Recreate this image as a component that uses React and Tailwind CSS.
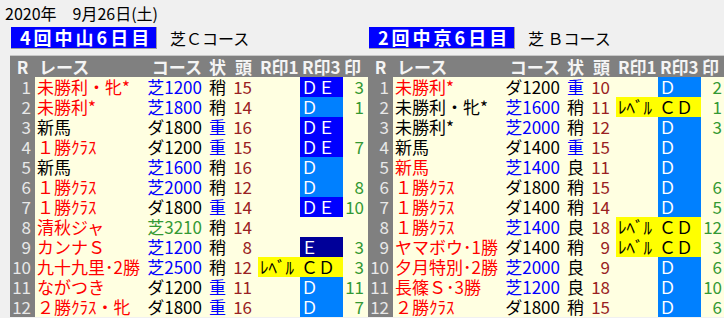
import React from 'react';

const FONT = { fontFamily: '"Noto Sans CJK JP", "Noto Sans", sans-serif' };

const GRID = 'grid grid-cols-[25px_112px_58px_25px_28px_42px_43px_25px]';

const nameColor = { r: 'text-[#ff0000]', k: 'text-black' };
const courseColor = { b: 'text-[#0000ff]', k: 'text-black', g: 'text-[#339933]' };
const markBg = {
  DE: 'bg-[#0000ff] text-white',
  D: 'bg-[#0080ff] text-white',
  E: 'bg-[#000099] text-white',
  CD: 'bg-[#ffff00] text-black',
};

// [name, nameColor, course, courseColor, cond, heads, r3, mark]
const nakayama = [
  ['未勝利・牝*', 'r', '芝1200', 'b', '稍', '15', 'DE', '3'],
  ['未勝利*', 'r', '芝1800', 'b', '稍', '14', 'D', '1'],
  ['新馬', 'k', 'ダ1800', 'k', '重', '16', 'DE', ''],
  ['１勝ｸﾗｽ', 'r', 'ダ1200', 'k', '重', '15', 'DE', '7'],
  ['新馬', 'k', '芝1600', 'b', '稍', '16', 'D', ''],
  ['１勝ｸﾗｽ', 'r', '芝2000', 'b', '稍', '12', 'D', '8'],
  ['１勝ｸﾗｽ', 'r', 'ダ1800', 'k', '重', '14', 'DE', '10'],
  ['清秋ジャ', 'r', '芝3210', 'g', '稍', '14', '', ''],
  ['カンナＳ', 'r', '芝1200', 'b', '稍', '8', 'E', '3'],
  ['九十九里･2勝', 'r', '芝2500', 'b', '稍', '12', 'CD', '3'],
  ['ながつき', 'r', 'ダ1200', 'k', '重', '11', 'D', '11'],
  ['２勝ｸﾗｽ・牝', 'r', 'ダ1800', 'k', '重', '16', 'D', '7'],
];

const chukyo = [
  ['未勝利*', 'r', 'ダ1200', 'k', '重', '10', 'D', '2'],
  ['未勝利・牝*', 'k', '芝1600', 'b', '稍', '11', 'CD', '1'],
  ['未勝利*', 'k', '芝2000', 'b', '稍', '12', 'D', '3'],
  ['新馬', 'k', 'ダ1400', 'k', '重', '15', 'D', ''],
  ['新馬', 'r', '芝1400', 'b', '良', '11', 'D', ''],
  ['１勝ｸﾗｽ', 'r', 'ダ1800', 'k', '稍', '15', 'D', '6'],
  ['１勝ｸﾗｽ', 'r', 'ダ1400', 'k', '稍', '14', 'D', '5'],
  ['１勝ｸﾗｽ', 'r', '芝1400', 'b', '良', '18', 'CD', '12'],
  ['ヤマボウ･1勝', 'r', 'ダ1400', 'k', '稍', '9', 'CD', '3'],
  ['夕月特別･2勝', 'r', '芝2000', 'b', '良', '9', 'D', '6'],
  ['長篠Ｓ･3勝', 'r', '芝1200', 'b', '良', '18', 'D', '10'],
  ['２勝ｸﾗｽ', 'r', 'ダ1800', 'k', '稍', '15', 'D', '6'],
];

const r3Label = { DE: 'ＤＥ', D: 'Ｄ', E: 'Ｅ', CD: 'ＣＤ' };

function RaceRow({ no, row }) {
  const [name, nc, course, cc, cond, heads, r3, mark] = row;
  const isLevel = r3 === 'CD';
  return (
    <div className={`${GRID} h-[20px] leading-[20px] text-[17px] whitespace-nowrap`}>
      <div className="bg-[#808080] text-[#e8e8e8] text-right pr-[4px]">{no}</div>
      <div className={`bg-[#ffffe1] pl-[2px] ${nameColor[nc]}`}>{name}</div>
      <div className={`bg-[#ffffe1] text-right pr-[3px] ${courseColor[cc]}`}>{course}</div>
      <div className={`bg-[#ffffe1] text-center ${cond === '重' ? 'text-[#0000ff]' : 'text-black'}`}>{cond}</div>
      <div className="bg-[#ffffe1] text-right pr-[6px] text-[#992222]">{heads}</div>
      <div className={`pl-[2px] ${isLevel ? 'bg-[#ffff00] text-black' : 'bg-[#ffffe1]'}`}>{isLevel ? 'ﾚﾍﾞﾙ' : ''}</div>
      <div className={`pl-[1px] ${r3 ? markBg[r3] : 'bg-[#ffffe1]'}`}>{r3 ? r3Label[r3] : ''}</div>
      <div className="bg-[#ffffe1] text-right pr-[4px] text-[#339933]">{mark}</div>
    </div>
  );
}

function Panel({ title, course, rows }) {
  return (
    <div className="w-[358px] shrink-0">
      <div className="flex items-center h-[22px]">
        <div className="ml-[1px] w-[146px] h-[22px] bg-[#0000ff] border-r border-b border-[#a0a0a0] text-white font-bold text-[18px] leading-[21px] tracking-[3px] pl-[9px]">
          {title}
        </div>
        <div className="ml-[13px] text-[16px] text-black">{course}</div>
      </div>
      <div className="mt-[6px] border-t border-[#c8c8c8]">
        <div className={`${GRID} h-[21px] leading-[21px] bg-[#808080] text-[#f4f4f4] font-bold text-[17px] whitespace-nowrap`}>
          <div className="text-center">R</div>
          <div className="pl-[4px]">レース</div>
          <div className="text-right pr-[3px]">コース</div>
          <div className="text-center">状</div>
          <div className="text-right pr-[6px]">頭</div>
          <div className="pl-[2px]">R印1</div>
          <div className="pl-[2px]">R印3</div>
          <div className="pl-[1px]">印</div>
        </div>
        {rows.map((row, i) => (
          <RaceRow key={i} no={i + 1} row={row} />
        ))}
      </div>
    </div>
  );
}

export default function App() {
  return (
    <div className="w-[724px] h-[318px] bg-[#f0f0f0] overflow-hidden" style={FONT}>
      <div className="h-[24px] pl-[5px] pt-[3px] text-[16px] leading-[20px] text-black">2020年　9月26日(土)</div>
      <div className="flex mt-[3px] pl-[10px]">
        <Panel title="4回中山6日目" course="芝Ｃコース" rows={nakayama} />
        <Panel title="2回中京6日目" course="芝 Ｂコース" rows={chukyo} />
      </div>
    </div>
  );
}
